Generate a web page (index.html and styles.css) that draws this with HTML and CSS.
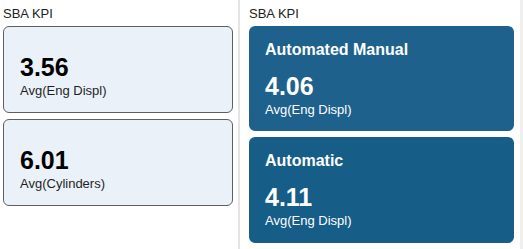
FILE: index.html
```html
<!DOCTYPE html>
<html lang="en">
<head>
<meta charset="utf-8">
<title>SBA KPI</title>
<link rel="stylesheet" href="styles.css">
</head>
<body>
<div class="dash">
  <section class="panel panel-left">
    <div class="panel-title">SBA KPI</div>
    <div class="kpi-list">
      <div class="kpi kpi-light">
        <div class="kpi-value">3.56</div>
        <div class="kpi-label">Avg(Eng Displ)</div>
      </div>
      <div class="kpi kpi-light">
        <div class="kpi-value">6.01</div>
        <div class="kpi-label">Avg(Cylinders)</div>
      </div>
    </div>
  </section>
  <section class="panel panel-right">
    <div class="panel-title">SBA KPI</div>
    <div class="kpi-list">
      <div class="kpi kpi-dark kpi-dark-a">
        <div class="kpi-title">Automated Manual</div>
        <div class="kpi-value">4.06</div>
        <div class="kpi-label">Avg(Eng Displ)</div>
      </div>
      <div class="kpi kpi-dark kpi-dark-b">
        <div class="kpi-title">Automatic</div>
        <div class="kpi-value">4.11</div>
        <div class="kpi-label">Avg(Eng Displ)</div>
      </div>
      <div class="kpi kpi-dark kpi-dark-c"></div>
    </div>
  </section>
  <div class="scroll-strip"></div>
</div>
</body>
</html>
```
FILE: styles.css
```css
html, body {
  margin: 0;
  padding: 0;
  background: #ffffff;
}
body {
  font-family: "Liberation Sans", Arial, sans-serif;
  color: #222222;
  overflow: hidden;
}
.dash {
  display: flex;
  height: 249px;
  overflow: hidden;
}
.panel {
  padding-top: 6px;
  box-sizing: border-box;
}
.panel-left {
  width: 238px;
  padding-left: 3px;
  padding-right: 5px;
}
.panel-right {
  width: 282px;
  border-left: 2px solid #e4e4e4;
  padding-left: 9px;
  padding-right: 6px;
}
.scroll-strip {
  width: 3px;
  background: #efefef;
}
.panel-title {
  font-size: 13px;
  line-height: 15px;
  color: #222222;
  margin-bottom: 5px;
}
.kpi-list {
  display: flex;
  flex-direction: column;
  gap: 6px;
}
.kpi {
  border-radius: 6px;
  box-sizing: border-box;
  flex-shrink: 0;
}
.kpi-light {
  background: #eaf1f8;
  border: 1px solid #5f5f5f;
  padding: 25px 16px 14px;
  height: 87px;
}
.kpi-dark {
  color: #ffffff;
  padding: 15px 16px 14px;
  height: 105px;
}
.kpi-dark-a { background: #1e618c; }
.kpi-dark-b { background: #165d88; height: 106px; }
.kpi-dark-c { background: #1a5c87; border-top: 1px solid #a9bccd; }
.kpi-title {
  font-size: 16px;
  line-height: 18px;
  font-weight: bold;
  margin-bottom: 12px;
}
.kpi-value {
  font-size: 25px;
  line-height: 30px;
  font-weight: bold;
}
.kpi-light .kpi-value { color: #000000; }
.kpi-label {
  font-size: 13px;
  line-height: 15px;
  margin-top: 1px;
}
.kpi-light .kpi-label { color: #1f1f1f; }
```
